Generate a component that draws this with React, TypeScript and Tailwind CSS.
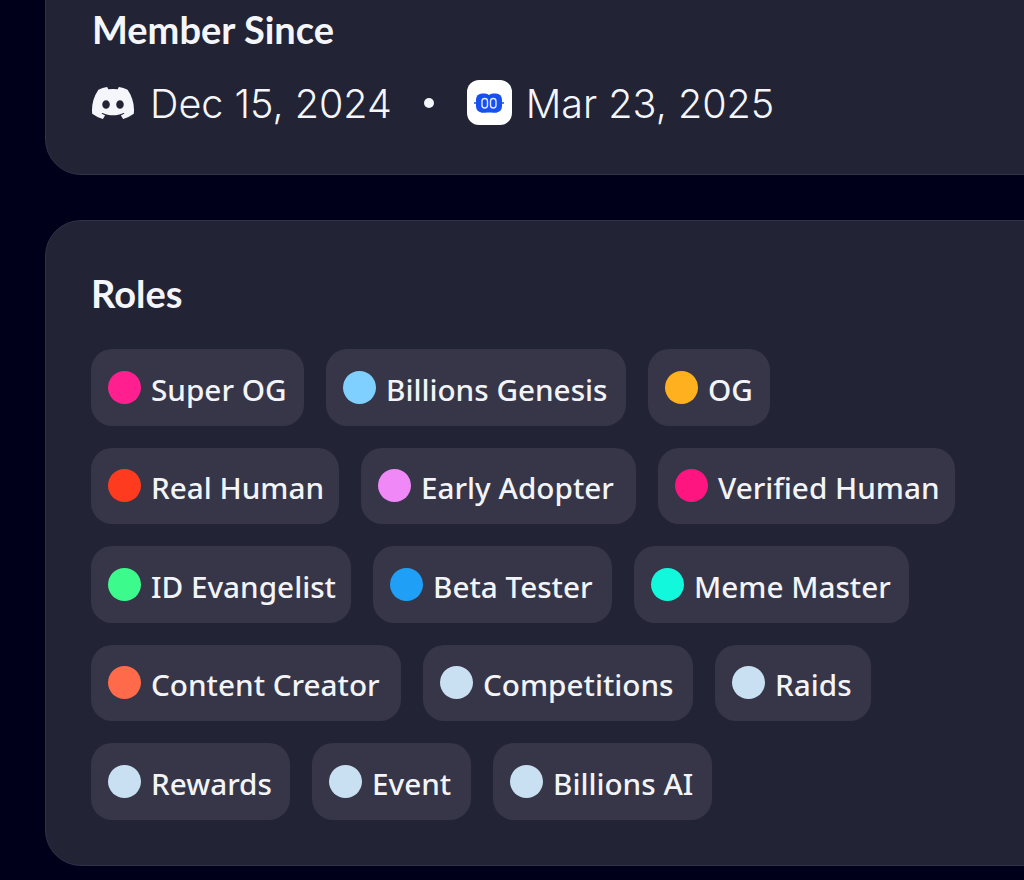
const roles = [
  { label: 'Super OG', color: 'bg-[#ff1f8f]', width: 'w-[213px]' },
  { label: 'Billions Genesis', color: 'bg-[#7fd0ff]', width: 'w-[300px]' },
  { label: 'OG', color: 'bg-[#ffb01f]', width: 'w-[122px]' },
  { label: 'Real Human', color: 'bg-[#ff3b1f]', width: 'w-[248px]' },
  { label: 'Early Adopter', color: 'bg-[#f088f8]', width: 'w-[275px]' },
  { label: 'Verified Human', color: 'bg-[#ff1580]', width: 'w-[297px]' },
  { label: 'ID Evangelist', color: 'bg-[#3dfa8c]', width: 'w-[260px]' },
  { label: 'Beta Tester', color: 'bg-[#1f9ff5]', width: 'w-[239px]' },
  { label: 'Meme Master', color: 'bg-[#12f8dc]', width: 'w-[275px]' },
  { label: 'Content Creator', color: 'bg-[#ff6a4a]', width: 'w-[310px]' },
  { label: 'Competitions', color: 'bg-[#c8e0f2]', width: 'w-[270px]' },
  { label: 'Raids', color: 'bg-[#c8e0f2]', width: 'w-[156px]' },
  { label: 'Rewards', color: 'bg-[#c8e0f2]', width: 'w-[199px]' },
  { label: 'Event', color: 'bg-[#c8e0f2]', width: 'w-[159px]' },
  { label: 'Billions AI', color: 'bg-[#c8e0f2]', width: 'w-[219px]' },
]

function DiscordIcon() {
  return (
    <svg viewBox="0 0 24 24" className="h-[42px] w-[42px] shrink-0 fill-[#f5f6fb]">
      <path d="M20.317 4.37a19.79 19.79 0 0 0-4.885-1.515.074.074 0 0 0-.079.037c-.21.375-.444.864-.608 1.25a18.27 18.27 0 0 0-5.487 0 12.64 12.64 0 0 0-.617-1.25.077.077 0 0 0-.079-.037A19.736 19.736 0 0 0 3.677 4.37a.07.07 0 0 0-.032.027C.533 9.046-.32 13.58.099 18.057a.082.082 0 0 0 .031.057 19.9 19.9 0 0 0 5.993 3.03.078.078 0 0 0 .084-.028 14.09 14.09 0 0 0 1.226-1.994.076.076 0 0 0-.041-.106 13.107 13.107 0 0 1-1.872-.892.077.077 0 0 1-.008-.128 10.2 10.2 0 0 0 .372-.292.074.074 0 0 1 .077-.01c3.928 1.793 8.18 1.793 12.062 0a.074.074 0 0 1 .078.01c.12.098.246.198.373.292a.077.077 0 0 1-.006.127 12.299 12.299 0 0 1-1.873.892.077.077 0 0 0-.041.107c.36.698.772 1.362 1.225 1.993a.076.076 0 0 0 .084.028 19.839 19.839 0 0 0 6.002-3.03.077.077 0 0 0 .032-.054c.5-5.177-.838-9.674-3.549-13.66a.061.061 0 0 0-.031-.03zM8.02 15.33c-1.183 0-2.157-1.085-2.157-2.419 0-1.333.956-2.419 2.157-2.419 1.21 0 2.176 1.096 2.157 2.42 0 1.333-.956 2.418-2.157 2.418zm7.975 0c-1.183 0-2.157-1.085-2.157-2.419 0-1.333.955-2.419 2.157-2.419 1.21 0 2.176 1.096 2.157 2.42 0 1.333-.946 2.418-2.157 2.418z" />
    </svg>
  )
}

function BotIcon() {
  return (
    <span className="flex h-[45px] w-[45px] shrink-0 items-center justify-center rounded-[12px] bg-white">
      <svg viewBox="0 0 30 20" className="h-[20px] w-[30px]">
        <path d="M0 9.200h2.500v1.600H0zM27.500 9.200H30v1.600h-2.500z" fill="#1650f0" />
        <rect x="2" y="0.500" width="15" height="19" rx="6" fill="#1650f0" />
        <rect x="13" y="0.500" width="15" height="19" rx="6" fill="#1650f0" />
        <rect x="7" y="7" width="16" height="12.500" fill="#1650f0" />
        <rect x="8" y="5.500" width="5.500" height="9.500" rx="2.750" fill="none" stroke="#dfe8ff" strokeWidth="1.400" />
        <rect x="16.500" y="5.500" width="5.500" height="9.500" rx="2.750" fill="none" stroke="#dfe8ff" strokeWidth="1.400" />
      </svg>
    </span>
  )
}

function RoleChip({ label, color, width }: { label: string; color: string; width: string }) {
  return (
    <div className={`flex h-[76.5px] items-center gap-[10px] rounded-[21px] bg-[#363648] pl-[17px] ${width}`}>
      <span className={`h-[33px] w-[33px] shrink-0 rounded-full ${color}`} />
      <span className="whitespace-nowrap pt-[5px] font-['Noto_Sans',sans-serif] text-[29.7px] leading-none font-medium text-[#f3f4f8]">{label}</span>
    </div>
  )
}

export default function App() {
  return (
    <div className="h-[880px] w-[1024px] overflow-hidden bg-[#00001a] pl-[45px]">
      <div className="-mt-[40px] flex w-[1020px] flex-col gap-[45px]">
        {/* Member since */}
        <section className="h-[215px] rounded-[36px] border border-[#2e3348] bg-[#222334] pl-[46px] pt-[47px]">
          <h2 className="font-['Lato',sans-serif] text-[38px] leading-[42px] font-bold text-[#f5f6fb]">Member Since</h2>
          <div className="mt-[27px] flex items-center">
            <DiscordIcon />
            <span className="ml-[16px] pt-[3px] font-['Inter',sans-serif] text-[39.5px] leading-[48px] font-light text-[#f5f6fb]">Dec 15, 2024</span>
            <span className="ml-[32px] h-[10px] w-[10px] rounded-full bg-[#f5f6fb]" />
            <span className="ml-[33px]"><BotIcon /></span>
            <span className="ml-[14px] pt-[3px] font-['Inter',sans-serif] text-[39.5px] leading-[48px] font-light text-[#f5f6fb]">Mar 23, 2025</span>
          </div>
        </section>

        {/* Roles */}
        <section className="h-[646px] rounded-[36px] border border-[#2e3348] bg-[#222334] pl-[45px] pt-[51px]">
          <h2 className="font-['Lato',sans-serif] text-[38px] leading-[42px] font-bold text-[#f5f6fb]">Roles</h2>
          <div className="mt-[35px] flex w-[900px] flex-wrap gap-x-[22px] gap-y-[22px]">
            {roles.map((role) => (
              <RoleChip key={role.label} label={role.label} color={role.color} width={role.width} />
            ))}
          </div>
        </section>
      </div>
    </div>
  )
}
